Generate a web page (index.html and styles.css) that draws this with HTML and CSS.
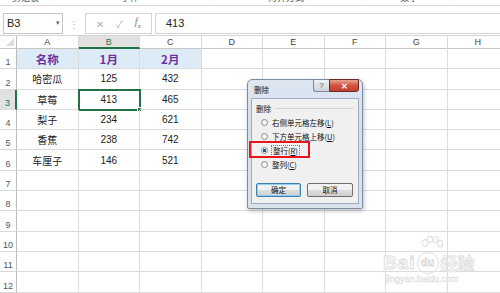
FILE: index.html
```html
<!DOCTYPE html>
<html>
<head>
<meta charset="utf-8">
<link rel="stylesheet" href="styles.css">
</head>
<body>
<div class="app">
  <div class="ribbon">
    <span class="grp g1">剪贴板</span><span class="launch l1">⌐</span>
    <span class="grp g2">字体</span><span class="launch l2">⌐</span>
    <span class="grp g3">对齐方式</span><span class="launch l3">⌐</span>
    <span class="grp g4">数字</span><span class="launch l4">⌐</span>
  </div>
  <div class="fbar">
    <div class="namebox"><span>B3</span><span class="dd">▾</span></div>
    <div class="dots">⋮</div>
    <div class="fbtns">
      <span class="fb">✕</span><span class="fb">✓</span><span class="fb fx"><i>f</i><sub>x</sub></span>
    </div>
    <div class="finput">413</div>
  </div>
  <div class="sheet">
    <div class="ch corner"><svg width="8" height="8" viewBox="0 0 8 8"><path d="M8 0 L8 8 L0 8 Z" fill="#dcdcdc"/></svg></div>
    <div class="ch">A</div><div class="ch sel">B</div><div class="ch">C</div><div class="ch">D</div><div class="ch">E</div><div class="ch">F</div><div class="ch">G</div><div class="ch">H</div>

    <div class="rh">1</div><div class="c hd">名称</div><div class="c hd">1月</div><div class="c hd">2月</div><div class="c"></div><div class="c"></div><div class="c"></div><div class="c"></div><div class="c"></div>
    <div class="rh">2</div><div class="c">哈密瓜</div><div class="c">125</div><div class="c">432</div><div class="c"></div><div class="c"></div><div class="c"></div><div class="c"></div><div class="c"></div>
    <div class="rh rsel">3</div><div class="c">草莓</div><div class="c active">413<span class="handle"></span></div><div class="c">465</div><div class="c"></div><div class="c"></div><div class="c"></div><div class="c"></div><div class="c"></div>
    <div class="rh">4</div><div class="c">梨子</div><div class="c">234</div><div class="c">621</div><div class="c"></div><div class="c"></div><div class="c"></div><div class="c"></div><div class="c"></div>
    <div class="rh">5</div><div class="c">香蕉</div><div class="c">238</div><div class="c">742</div><div class="c"></div><div class="c"></div><div class="c"></div><div class="c"></div><div class="c"></div>
    <div class="rh">6</div><div class="c">车厘子</div><div class="c">146</div><div class="c">521</div><div class="c"></div><div class="c"></div><div class="c"></div><div class="c"></div><div class="c"></div>
    <div class="rh">7</div><div class="c"></div><div class="c"></div><div class="c"></div><div class="c"></div><div class="c"></div><div class="c"></div><div class="c"></div><div class="c"></div>
    <div class="rh">8</div><div class="c"></div><div class="c"></div><div class="c"></div><div class="c"></div><div class="c"></div><div class="c"></div><div class="c"></div><div class="c"></div>
    <div class="rh">9</div><div class="c"></div><div class="c"></div><div class="c"></div><div class="c"></div><div class="c"></div><div class="c"></div><div class="c"></div><div class="c"></div>
    <div class="rh">10</div><div class="c"></div><div class="c"></div><div class="c"></div><div class="c"></div><div class="c"></div><div class="c"></div><div class="c"></div><div class="c"></div>
    <div class="rh">11</div><div class="c"></div><div class="c"></div><div class="c"></div><div class="c"></div><div class="c"></div><div class="c"></div><div class="c"></div><div class="c"></div>
    <div class="rh">12</div><div class="c"></div><div class="c"></div><div class="c"></div><div class="c"></div><div class="c"></div><div class="c"></div><div class="c"></div><div class="c"></div>
  </div>

  <div class="dialog">
    <div class="dtitle">
      <span class="dname">删除</span>
      <div class="tbtns"><span class="help">?</span><span class="close">✕</span></div>
    </div>
    <div class="dbody">
      <div class="glabel"><span>删除</span><span class="gline"></span></div>
      <div class="opts">
        <div class="opt"><span class="radio"></span><span>右侧单元格左移(<u>L</u>)</span></div>
        <div class="opt"><span class="radio"></span><span>下方单元格上移(<u>U</u>)</span></div>
        <div class="opt"><span class="radio on"></span><span class="focus">整行(<u>R</u>)</span></div>
        <div class="opt"><span class="radio"></span><span>整列(<u>C</u>)</span></div>
      </div>
      <div class="dbtns"><span class="btn def">确定</span><span class="btn">取消</span></div>
    </div>
    <div class="redbox"></div>
  </div>

  <div class="wm">
    <svg class="paw" width="26" height="22" viewBox="0 0 26 22">
      <g fill="none" stroke="#e2e2e2" stroke-width="1.2">
        <ellipse cx="6" cy="7" rx="2.6" ry="3.3"/>
        <ellipse cx="11" cy="3.5" rx="2.6" ry="3.2"/>
        <ellipse cx="16.5" cy="3.5" rx="2.6" ry="3.2"/>
        <ellipse cx="21" cy="7.5" rx="2.6" ry="3.3"/>
      </g>
    </svg>
    <div class="wmrow"><span class="bai">Bai</span><span class="du">du</span><span class="jy">经验</span></div>
    <div class="wmurl">jingyan.baidu.com</div>
  </div>
</div>
</body>
</html>
```
FILE: styles.css
```css
* { box-sizing: border-box; }
html, body { margin: 0; padding: 0; }
body { width: 500px; height: 293px; overflow: hidden; background: #fff; font-family: "Noto Sans CJK SC", "Liberation Sans", sans-serif; color: #222; }
.app { position: relative; width: 500px; height: 293px; overflow: hidden; }

.ribbon { position: relative; height: 6px; border-bottom: 1px solid #d8d8d8; overflow: hidden; font-size: 9px; color: #555; }
.grp, .launch { position: absolute; top: -8px; line-height: 12px; }
.g1 { left: 12px; } .l1 { left: 51px; }
.g2 { left: 121px; } .l2 { left: 208px; }
.g3 { left: 268px; } .l3 { left: 361px; }
.g4 { left: 400px; } .l4 { left: 453px; }
.launch { font-size: 8px; color: #888; }

.fbar { display: flex; align-items: center; height: 30px; padding: 5px 0 0 3px; border-bottom: 1px solid #d4d4d4; }
.namebox { width: 60px; height: 21px; border: 1px solid #c6c6c6; display: flex; align-items: center; justify-content: space-between; padding: 0 2px 0 3px; font-family: "Liberation Sans", sans-serif; font-size: 11px; color: #222; }
.dd { font-size: 7px; color: #666; }
.dots { width: 22px; text-align: center; color: #aaa; font-size: 10px; }
.fbtns { width: 67px; height: 21px; border: 1px solid #d4d4d4; display: flex; align-items: center; justify-content: space-around; padding: 0 4px; color: #b0b0b0; font-size: 10px; }
.fx { color: #777; font-family: "Liberation Serif", serif; font-size: 10px; }
.fx sub { font-size: 7px; }
.finput { flex: 1; height: 21px; margin-left: 3px; border: 1px solid #d4d4d4; border-right: none; padding-left: 10px; line-height: 19px; font-family: "Liberation Sans", sans-serif; font-size: 11px; color: #222; }

.sheet { display: grid; grid-template-columns: 17px repeat(8, 61.5px); grid-template-rows: 13px repeat(12, 20.3px); }
.ch { border-right: 1px solid #d9d9d9; border-bottom: 1px solid #c8c8c8; font-family: "Liberation Sans", sans-serif; font-size: 9px; color: #444; text-align: center; line-height: 12px; }
.ch.corner { display: flex; align-items: flex-end; justify-content: flex-end; padding: 0 2px 2px 0; border-right: 1px solid #bdbdbd; }
.ch.sel { background: #e1e1e1; border-bottom: 2px solid #217346; color: #217346; }
.rh { border-right: 1px solid #bdbdbd; border-bottom: 1px solid #d9d9d9; font-family: "Liberation Sans", sans-serif; font-size: 9px; color: #555; display: flex; align-items: flex-end; justify-content: center; padding-bottom: 1px; }
.rh.rsel { background: #e1e1e1; color: #217346; border-right: 2px solid #217346; }
.c { position: relative; border-right: 1px solid #dcdcdc; border-bottom: 1px solid #dcdcdc; display: flex; align-items: center; justify-content: center; font-size: 10px; color: #222; font-family: "Liberation Sans", "Noto Sans CJK SC", sans-serif; }
.c.hd { background: #ddebf7; color: #7030a0; font-weight: bold; font-size: 11.5px; font-family: "Noto Sans CJK SC", sans-serif; }
.c.active { outline: 2px solid #217346; outline-offset: -1px; }
.handle { position: absolute; right: -3px; bottom: -3px; width: 5px; height: 5px; background: #217346; border: 1px solid #fff; }

.dialog { position: absolute; left: 247px; top: 79px; width: 116px; height: 130px; border: 1px solid #7d8ea3; border-radius: 5px 5px 2px 2px; background: linear-gradient(#dde6f1, #d4dfec 40%, #d9e3ef); box-shadow: 1px 2px 4px rgba(0,0,0,0.25); padding: 0 3px 4px 3px; display: flex; flex-direction: column; }
.dtitle { height: 18px; display: flex; justify-content: space-between; align-items: flex-start; }
.dname { font-size: 7.5px; color: #111; padding: 4px 0 0 3px; }
.tbtns { display: flex; margin-top: -1px; }
.help { width: 16px; height: 13px; border: 1px solid #7f8a98; border-right: none; border-radius: 0 0 0 3px; background: linear-gradient(#eef1f5, #cdd3db); font-size: 8px; line-height: 11px; text-align: center; color: #555; font-family: "Liberation Sans", sans-serif; }
.close { width: 30px; height: 13px; border: 1px solid #6b2a22; border-radius: 0 0 3px 0; background: linear-gradient(#e8a294, #d1533f 50%, #c24030); color: #fff; font-size: 8px; line-height: 11px; text-align: center; font-weight: bold; }
.dbody { flex: 1; background: #f0f0f0; border: 1px solid #9fadbd; padding: 3px 4px 0 4px; font-size: 7.5px; color: #111; }
.glabel { display: flex; align-items: center; gap: 4px; height: 12px; }
.gline { flex: 1; height: 1px; background: #d5d5d5; }
.opts { padding: 3px 0 0 5px; display: flex; flex-direction: column; gap: 2.5px; }
.opt { display: flex; align-items: center; gap: 4px; height: 11.5px; }
.radio { width: 7px; height: 7px; border-radius: 50%; border: 1px solid #8e8f8f; background: radial-gradient(circle, #fff 20%, #e6e6e6 90%); flex: none; }
.radio.on { background: radial-gradient(circle, #2a55a5 0 1.6px, #e8eef5 2px); }
.focus { outline: 1px dotted #777; outline-offset: 0; padding: 0 1px; line-height: 10px; }
.dbtns { display: flex; justify-content: space-between; margin-top: 12px; padding: 0 1px 0 0; }
.btn { width: 46px; height: 14px; border: 1px solid #707070; border-radius: 2px; background: linear-gradient(#f2f2f2 45%, #dcdcdc 55%, #cfcfcf); text-align: center; line-height: 12px; font-size: 7.5px; color: #111; }
.btn.def { border-color: #3c7fb1; box-shadow: inset 0 0 0 1px #8fd0f4; width: 45px; }
.redbox { position: absolute; left: 1px; top: 61px; width: 61px; height: 17px; border: 2px solid #e8161c; }

.wm { position: absolute; left: 383px; top: 236px; width: 110px; color: #fff; }
.paw { position: absolute; left: 36px; top: 0; }
.wmrow { position: absolute; top: 14px; left: 0; display: flex; align-items: center; font-family: "Liberation Sans", sans-serif; }
.bai { font-size: 19px; font-weight: bold; color: #fff; -webkit-text-stroke: 1px #dedede; letter-spacing: 1px; }
.du { display: inline-block; width: 22px; height: 22px; border-radius: 50%; border: 1px solid #dedede; font-size: 11px; font-weight: bold; text-align: center; line-height: 19px; color: #fff; -webkit-text-stroke: 0.8px #d6d6d6; margin-left: 1px; }
.jy { font-family: "Noto Sans CJK SC", sans-serif; font-size: 17px; font-weight: bold; color: #fff; -webkit-text-stroke: 0.8px #dcdcdc; margin-left: 2px; }
.wmurl { position: absolute; top: 38px; left: 3px; font-size: 9px; color: #fff; -webkit-text-stroke: 0.5px #dcdcdc; font-family: "Liberation Sans", sans-serif; }
```
